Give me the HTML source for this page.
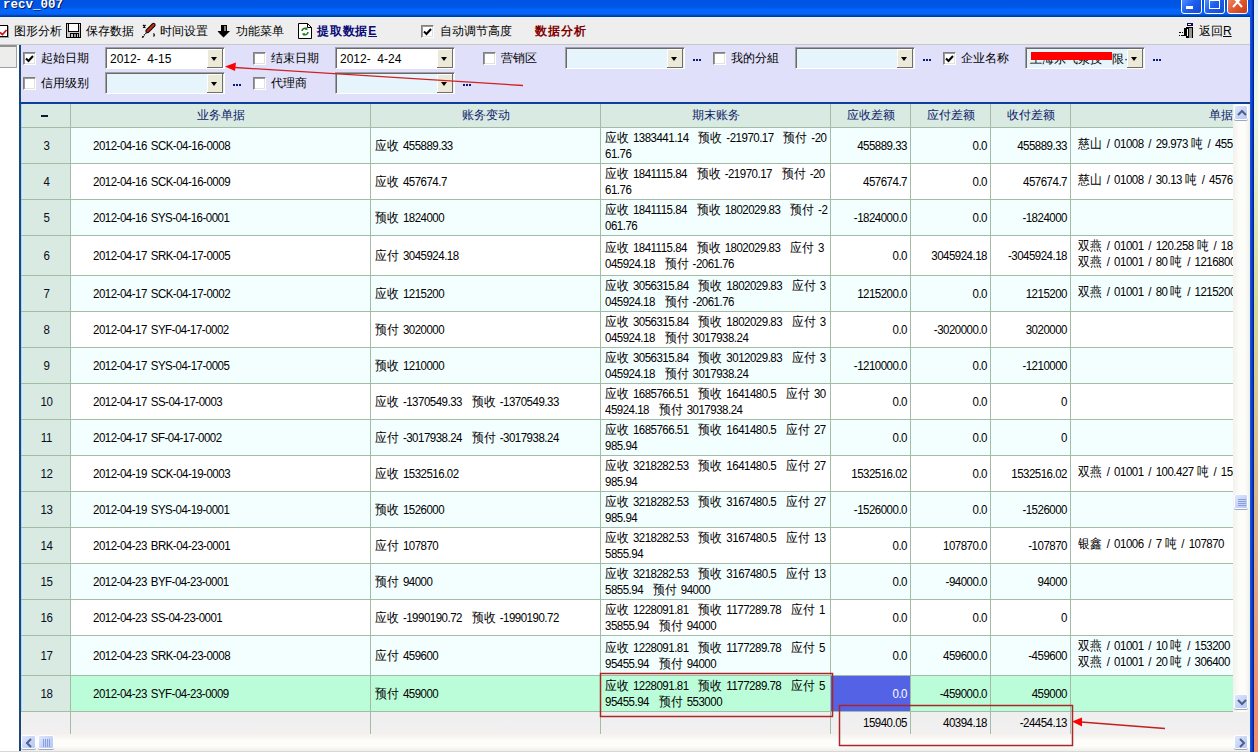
<!DOCTYPE html><html><head><meta charset="utf-8"><style>
*{margin:0;padding:0;box-sizing:border-box}
html,body{width:1260px;height:752px;overflow:hidden;background:#fff;font-family:"Liberation Sans",sans-serif;}
.a{position:absolute}
i.c{font-style:normal;font-size:12px;letter-spacing:0}
i.sp{font-style:normal;margin-left:2px}
.t{position:absolute;white-space:pre;font-size:11.5px;letter-spacing:-0.5px;word-spacing:1.2px;color:#000;line-height:14.6px;transform:scaleY(1.1);transform-origin:0 50%}
.lbl{position:absolute;white-space:pre;font-size:12px;color:#000;line-height:14px}
.cb{position:absolute;width:13px;height:13px;background:#fff;border-top:1px solid #808080;border-left:1px solid #808080;border-right:1px solid #fff;border-bottom:1px solid #fff;box-shadow:inset 1px 1px 0 #9a9a9a, inset -1px -1px 0 #e4e2da}
.combo{position:absolute;width:120px;height:22px;border-top:1px solid #a0a0a0;border-left:1px solid #a0a0a0;border-right:1px solid #fff;border-bottom:1px solid #fff;box-shadow:inset 1px 1px 0 #6a6a6a}
.btn{position:absolute;right:1px;top:1px;width:16px;height:19px;background:#ece9d8;border-right:1px solid #716f64;border-bottom:1px solid #716f64;box-shadow:inset 1px 1px 0 #fff}
.tri{position:absolute;left:4px;top:8px;width:0;height:0;border-left:3.5px solid transparent;border-right:3.5px solid transparent;border-top:4px solid #000}
.dots{position:absolute;width:8px;height:2px;background:linear-gradient(90deg,#0a1a80 2px,transparent 2px,transparent 3px,#0a1a80 3px,#0a1a80 5px,transparent 5px,transparent 6px,#0a1a80 6px)}
.hd{position:absolute;top:104px;height:23px;line-height:23px;font-size:12px;color:#0a1a6a;text-align:center;white-space:pre}
.rn{position:absolute;left:22px;width:49px;text-align:center;font-size:11.5px;color:#080c20;letter-spacing:-0.3px;transform:scaleY(1.1)}
</style></head><body>
<div class="a" style="left:1254px;top:0;width:6px;height:752px;background:linear-gradient(#d8f0f8 0%,#e8f8e0 14%,#d6dc94 40%,#dcb088 72%,#ee9070 93%,#ee9070 100%)"></div>
<div class="a" style="left:1258px;top:0;width:2px;height:752px;background:#fbfbf6"></div>
<div class="a" style="left:1250px;top:0;width:4px;height:752px;background:linear-gradient(90deg,#1a5ce8,#0838c8 60%,#001a80)"></div>
<div class="a" style="left:0;top:0;width:1250px;height:17px;background:linear-gradient(#0052e2 0px,#0058e8 8px,#0066fe 9.5px,#0462f6 14px,#0450d0 15px,#003a98 16px,#003a98 17px)"></div>
<div class="a" style="left:3px;top:-2px;font:bold 12.5px 'Liberation Mono';color:#fff;text-shadow:1px 1px 0 #0a1850;white-space:pre;line-height:14px">recv_007</div>
<div class="a" style="left:1181px;top:-4px;width:21px;height:18px;border:1px solid #fff;border-radius:3px;background:linear-gradient(135deg,#5a9cff,#1c5ef0 50%,#1848d0)"><div class="a" style="left:4px;top:9px;width:7px;height:3px;background:#fff"></div></div>
<div class="a" style="left:1204px;top:-4px;width:21px;height:18px;border:1px solid #fff;border-radius:3px;background:linear-gradient(135deg,#5a9cff,#1c5ef0 50%,#1848d0)"><div class="a" style="left:4px;top:1px;width:11px;height:11px;border:1px solid #fff;border-top-width:3px"></div></div>
<div class="a" style="left:1227px;top:-4px;width:21px;height:18px;border:1px solid #fff;border-radius:3px;background:linear-gradient(135deg,#f09070,#e05a30 50%,#c83818)"><svg class="a" style="left:4px;top:2px" width="12" height="10"><path d="M1 -2 L10 8 M10 -2 L1 8" stroke="#fff" stroke-width="2"/></svg></div>
<div class="a" style="left:0;top:17px;width:1250px;height:28px;background:linear-gradient(#eaeaf6 0px,#eeeeee 3px);border-top:1px solid #e0f8ff;border-bottom:1px solid #c8c8c8"></div>
<svg class="a" style="left:0;top:25px" width="10" height="13" shape-rendering="crispEdges"><rect x="0" y="0" width="8" height="12" fill="#000"/><rect x="0" y="1" width="7" height="10" fill="#fff"/><rect x="8" y="1" width="1" height="12" fill="#a0a0a0"/><rect x="0" y="12" width="9" height="1" fill="#a0a0a0"/><path d="M0 7.5 L2.5 9.5 L6.5 5" stroke="#d01818" stroke-width="1.8" fill="none" shape-rendering="auto"/></svg>
<div class="lbl" style="left:14px;top:24px">图形分析</div>
<svg class="a" style="left:66px;top:23px" width="15" height="15" shape-rendering="crispEdges"><rect x="0" y="0" width="15" height="15" fill="#000"/><rect x="1" y="1" width="13" height="13" fill="#c8c8c8"/><rect x="2" y="1" width="11" height="8" fill="#000"/><rect x="3" y="1" width="9" height="7" fill="#fff"/><rect x="13" y="1" width="1" height="1" fill="#fff"/><rect x="4" y="10" width="9" height="4" fill="#000"/><rect x="5" y="11" width="2" height="3" fill="#c8c8c8"/><rect x="8" y="11" width="2" height="3" fill="#909090"/><rect x="11" y="11" width="1" height="3" fill="#c8c8c8"/></svg>
<div class="lbl" style="left:86px;top:24px">保存数据</div>
<svg class="a" style="left:138px;top:20px" width="22" height="22"><path d="M9.5 11 L15.5 5" stroke="#000" stroke-width="4.2" stroke-linecap="round"/><path d="M9.5 11 L15.5 5" stroke="#c02818" stroke-width="2.4" stroke-linecap="round"/><path d="M4.5 17 L9 12" stroke="#000" stroke-width="1.2" stroke-dasharray="1.2 1"/><path d="M5 5 L7.5 7.5 M7.5 5 L5 7.5" stroke="#000" stroke-width="1.2"/><path d="M15.5 13.5 Q17 15 15.5 16.5" stroke="#000" stroke-width="1.2" fill="none"/><path d="M4 17.5 L6 16.5" stroke="#000" stroke-width="1.2"/></svg>
<div class="lbl" style="left:160px;top:24px">时间设置</div>
<svg class="a" style="left:217px;top:25px" width="14" height="13"><path d="M4 0 H10 V6 H13 L6.5 12.5 L0.5 6 H4 Z" fill="#000"/><rect x="7.5" y="1" width="1" height="5" fill="#fff"/><path d="M1.5 7.5 L6 12" stroke="#777" stroke-width="1"/></svg>
<div class="lbl" style="left:236px;top:24px">功能菜单</div>
<svg class="a" style="left:298px;top:23px" width="14" height="16"><path d="M0.5 0.5 H9.5 L13.5 4.5 V15.5 H0.5 Z" fill="#fff" stroke="#000"/><path d="M9.5 0.5 V4.5 H13.5" fill="none" stroke="#000"/><path d="M4 8 A3 3 0 0 1 9 6 M10 9 A3 3 0 0 1 5 11" stroke="#208020" stroke-width="1.6" fill="none"/><path d="M8 4 L10 6.5 L7 7 Z M6 13 L4 10.5 L7 10 Z" fill="#208020"/></svg>
<div class="lbl" style="left:317px;top:24px;font-weight:bold;color:#0a0a78;letter-spacing:0.8px">提取数据<u>E</u></div>
<div class="cb" style="left:421px;top:25px"></div>
<svg class="a" style="left:423px;top:28px" width="9" height="8"><path d="M1 3.5 L3.5 6 L8 1" stroke="#000" stroke-width="2" fill="none"/></svg>
<div class="lbl" style="left:440px;top:24px">自动调节高度</div>
<div class="lbl" style="left:535px;top:24px;font-weight:bold;color:#800000;letter-spacing:1px">数据分析</div>
<svg class="a" style="left:1178px;top:22px" width="16" height="17" shape-rendering="crispEdges"><rect x="9" y="1" width="6" height="3" fill="#0a0a50"/><rect x="10" y="2" width="3" height="1" fill="#fff"/><rect x="8" y="5" width="7" height="11" fill="#000"/><rect x="11" y="6" width="3" height="10" fill="#959595"/><rect x="9" y="7" width="1" height="7" fill="#fff"/><rect x="6" y="6" width="3" height="8" fill="#000"/><rect x="1" y="10" width="2" height="1" fill="#000"/><rect x="4" y="10" width="1" height="1" fill="#000"/><rect x="1" y="13" width="1" height="1" fill="#000"/><rect x="3" y="13" width="3" height="1" fill="#000"/></svg>
<div class="lbl" style="left:1199px;top:24px">返回<u>R</u></div>
<div class="a" style="left:0;top:45px;width:19px;height:707px;background:#fff"></div>
<div class="a" style="left:-2px;top:45px;width:19px;height:23px;background:#ededeb;border:1px solid #a0a0a0;border-top:2px solid #909090"></div>
<div class="a" style="left:19px;top:45px;width:1231px;height:57px;background:#e0e0fa"></div>
<div class="a" style="left:19px;top:45px;width:2px;height:707px;background:#1c4578"></div>
<div class="cb" style="left:23px;top:52px"></div>
<svg class="a" style="left:25px;top:55px" width="9" height="8"><path d="M1 3.5 L3.5 6 L8 1" stroke="#000" stroke-width="2" fill="none"/></svg>
<div class="lbl" style="left:41px;top:51px">起始日期</div>
<div class="combo" style="left:105px;top:47px;background:#fff"><div class="a" style="left:4px;top:4px;font-size:12px;white-space:pre;line-height:14px">2012-  4-15</div><div class="btn"><div class="tri"></div></div></div>
<div class="cb" style="left:253px;top:52px"></div>
<div class="lbl" style="left:271px;top:51px">结束日期</div>
<div class="combo" style="left:335px;top:47px;background:#fff"><div class="a" style="left:4px;top:4px;font-size:12px;white-space:pre;line-height:14px">2012-  4-24</div><div class="btn"><div class="tri"></div></div></div>
<div class="cb" style="left:483px;top:52px"></div>
<div class="lbl" style="left:501px;top:51px">营销区</div>
<div class="combo" style="left:565px;top:47px;background:#e6f4fc"><div class="a" style="left:4px;top:4px;font-size:12px;white-space:pre;line-height:14px"></div><div class="btn"><div class="tri"></div></div></div>
<div class="dots" style="left:693px;top:59px"></div>
<div class="cb" style="left:713px;top:52px"></div>
<div class="lbl" style="left:731px;top:51px">我的分組</div>
<div class="combo" style="left:795px;top:47px;background:#e6f4fc"><div class="a" style="left:4px;top:4px;font-size:12px;white-space:pre;line-height:14px"></div><div class="btn"><div class="tri"></div></div></div>
<div class="dots" style="left:923px;top:59px"></div>
<div class="cb" style="left:943px;top:52px"></div>
<svg class="a" style="left:945px;top:55px" width="9" height="8"><path d="M1 3.5 L3.5 6 L8 1" stroke="#000" stroke-width="2" fill="none"/></svg>
<div class="lbl" style="left:961px;top:51px">企业名称</div>
<div class="combo" style="left:1025px;top:47px;background:#e6f4fc"><div class="a" style="left:86px;top:4px;font-size:12px;line-height:14px;white-space:pre">限·</div><div class="a" style="left:4px;top:4px;font-size:12px;white-space:pre;line-height:14px"><span style="position:relative;top:0px">上海东气泵技</span></div><div class="btn"><div class="tri"></div></div></div>
<div class="dots" style="left:1153px;top:59px"></div>
<div class="a" style="left:1031px;top:52px;width:81px;height:8px;background:#ff0000"></div>
<div class="cb" style="left:23px;top:77px"></div>
<div class="lbl" style="left:41px;top:76px">信用级别</div>
<div class="combo" style="left:105px;top:72px;background:#e6f4fc"><div class="a" style="left:4px;top:4px;font-size:12px;white-space:pre;line-height:14px"></div><div class="btn"><div class="tri"></div></div></div>
<div class="dots" style="left:233px;top:84px"></div>
<div class="cb" style="left:253px;top:77px"></div>
<div class="lbl" style="left:271px;top:76px">代理商</div>
<div class="combo" style="left:335px;top:72px;background:#e6f4fc"><div class="a" style="left:4px;top:4px;font-size:12px;white-space:pre;line-height:14px"></div><div class="btn"><div class="tri"></div></div></div>
<div class="dots" style="left:463px;top:84px"></div>
<div class="a" style="left:19px;top:102px;width:1231px;height:2px;background:#0c3e9e"></div>
<div class="a" style="left:21px;top:104px;width:1212px;height:607px;background:#fff"></div>
<div class="a" style="left:21px;top:104px;width:1212px;height:23px;background:#d9eae2"></div>
<div class="a" style="left:71px;top:128px;width:1162px;height:35px;background:#f3fefe"></div>
<div class="a" style="left:71px;top:164px;width:1162px;height:35px;background:#ffffff"></div>
<div class="a" style="left:71px;top:200px;width:1162px;height:35px;background:#f3fefe"></div>
<div class="a" style="left:71px;top:236px;width:1162px;height:39px;background:#ffffff"></div>
<div class="a" style="left:71px;top:276px;width:1162px;height:35px;background:#f3fefe"></div>
<div class="a" style="left:71px;top:312px;width:1162px;height:35px;background:#ffffff"></div>
<div class="a" style="left:71px;top:348px;width:1162px;height:35px;background:#f3fefe"></div>
<div class="a" style="left:71px;top:384px;width:1162px;height:35px;background:#ffffff"></div>
<div class="a" style="left:71px;top:420px;width:1162px;height:35px;background:#f3fefe"></div>
<div class="a" style="left:71px;top:456px;width:1162px;height:35px;background:#ffffff"></div>
<div class="a" style="left:71px;top:492px;width:1162px;height:35px;background:#f3fefe"></div>
<div class="a" style="left:71px;top:528px;width:1162px;height:35px;background:#ffffff"></div>
<div class="a" style="left:71px;top:564px;width:1162px;height:35px;background:#f3fefe"></div>
<div class="a" style="left:71px;top:600px;width:1162px;height:35px;background:#ffffff"></div>
<div class="a" style="left:71px;top:636px;width:1162px;height:39px;background:#f3fefe"></div>
<div class="a" style="left:71px;top:676px;width:1162px;height:35px;background:#bbfdd8"></div>
<div class="a" style="left:831px;top:676px;width:79px;height:35px;background:#5462e6"></div>
<div class="a" style="left:21px;top:128px;width:49px;height:583px;background:#d9eae2"></div>
<div class="a" style="left:21px;top:104px;width:1px;height:630px;background:#a8d6f6"></div>
<div class="a" style="left:22px;top:104px;width:1px;height:630px;background:#cdeefb"></div>
<div class="a" style="left:21px;top:712px;width:1229px;height:22px;background:linear-gradient(#efefef,#f2f0f0)"></div>
<div class="a" style="left:21px;top:127px;width:1212px;height:1px;background:#a2bca5"></div>
<div class="a" style="left:21px;top:163px;width:1212px;height:1px;background:#a2bca5"></div>
<div class="a" style="left:21px;top:199px;width:1212px;height:1px;background:#a2bca5"></div>
<div class="a" style="left:21px;top:235px;width:1212px;height:1px;background:#a2bca5"></div>
<div class="a" style="left:21px;top:275px;width:1212px;height:1px;background:#a2bca5"></div>
<div class="a" style="left:21px;top:311px;width:1212px;height:1px;background:#a2bca5"></div>
<div class="a" style="left:21px;top:347px;width:1212px;height:1px;background:#a2bca5"></div>
<div class="a" style="left:21px;top:383px;width:1212px;height:1px;background:#a2bca5"></div>
<div class="a" style="left:21px;top:419px;width:1212px;height:1px;background:#a2bca5"></div>
<div class="a" style="left:21px;top:455px;width:1212px;height:1px;background:#a2bca5"></div>
<div class="a" style="left:21px;top:491px;width:1212px;height:1px;background:#a2bca5"></div>
<div class="a" style="left:21px;top:527px;width:1212px;height:1px;background:#a2bca5"></div>
<div class="a" style="left:21px;top:563px;width:1212px;height:1px;background:#a2bca5"></div>
<div class="a" style="left:21px;top:599px;width:1212px;height:1px;background:#a2bca5"></div>
<div class="a" style="left:21px;top:635px;width:1212px;height:1px;background:#a2bca5"></div>
<div class="a" style="left:21px;top:675px;width:1212px;height:1px;background:#a2bca5"></div>
<div class="a" style="left:21px;top:711px;width:1212px;height:1px;background:#a2bca5"></div>
<div class="a" style="left:70px;top:104px;width:1px;height:630px;background:#a2bca5"></div>
<div class="a" style="left:370px;top:104px;width:1px;height:630px;background:#a2bca5"></div>
<div class="a" style="left:600px;top:104px;width:1px;height:630px;background:#a2bca5"></div>
<div class="a" style="left:830px;top:104px;width:1px;height:630px;background:#a2bca5"></div>
<div class="a" style="left:910px;top:104px;width:1px;height:630px;background:#a2bca5"></div>
<div class="a" style="left:990px;top:104px;width:1px;height:630px;background:#a2bca5"></div>
<div class="a" style="left:1070px;top:104px;width:1px;height:630px;background:#a2bca5"></div>
<div class="hd" style="left:21px;width:49px"></div>
<div class="hd" style="left:71px;width:299px">业务单据</div>
<div class="hd" style="left:371px;width:229px">账务变动</div>
<div class="hd" style="left:601px;width:229px">期末账务</div>
<div class="hd" style="left:831px;width:79px">应收差额</div>
<div class="hd" style="left:911px;width:79px">应付差额</div>
<div class="hd" style="left:991px;width:79px">收付差额</div>
<div class="hd" style="left:1071px;width:162px;text-align:right">单据</div>
<div class="a" style="left:41px;top:115px;width:7px;height:2px;background:#101830"></div>
<div class="rn" style="top:138.1px;line-height:17px">3</div>
<div class="t" style="left:93px;top:139.29999999999998px;color:#000">2012-04-16 SCK-04-16-0008</div>
<div class="t" style="left:375px;top:139.29999999999998px;color:#000"><i class="c">应收</i> 455889.33</div>
<div class="t" style="left:605px;top:131.1px;color:#000"><i class="c">应收</i> 1383441.14 <i class="sp"> </i><i class="c">预收</i> -21970.17 <i class="sp"> </i><i class="c">预付</i> -20<br>61.76</div>
<div class="t" style="left:831px;top:139.29999999999998px;color:#000;width:76px;text-align:right">455889.33</div>
<div class="t" style="left:911px;top:139.29999999999998px;color:#000;width:76px;text-align:right">0.0</div>
<div class="t" style="left:991px;top:139.29999999999998px;color:#000;width:76px;text-align:right">455889.33</div>
<div class="a" style="left:1071px;top:128px;width:162px;height:35px;overflow:hidden"><div class="t" style="left:7px;top:8.799999999999983px;word-spacing:2px"><i class="c">慈山</i> / 01008 / 29.973<i class="c" style="margin-left:3px">吨</i> / 455889.33</div></div>
<div class="rn" style="top:174.1px;line-height:17px">4</div>
<div class="t" style="left:93px;top:175.29999999999998px;color:#000">2012-04-16 SCK-04-16-0009</div>
<div class="t" style="left:375px;top:175.29999999999998px;color:#000"><i class="c">应收</i> 457674.7</div>
<div class="t" style="left:605px;top:167.1px;color:#000"><i class="c">应收</i> 1841115.84 <i class="sp"> </i><i class="c">预收</i> -21970.17 <i class="sp"> </i><i class="c">预付</i> -20<br>61.76</div>
<div class="t" style="left:831px;top:175.29999999999998px;color:#000;width:76px;text-align:right">457674.7</div>
<div class="t" style="left:911px;top:175.29999999999998px;color:#000;width:76px;text-align:right">0.0</div>
<div class="t" style="left:991px;top:175.29999999999998px;color:#000;width:76px;text-align:right">457674.7</div>
<div class="a" style="left:1071px;top:164px;width:162px;height:35px;overflow:hidden"><div class="t" style="left:7px;top:8.799999999999983px;word-spacing:2px"><i class="c">慈山</i> / 01008 / 30.13<i class="c" style="margin-left:3px">吨</i> / 457674.7</div></div>
<div class="rn" style="top:210.1px;line-height:17px">5</div>
<div class="t" style="left:93px;top:211.29999999999998px;color:#000">2012-04-16 SYS-04-16-0001</div>
<div class="t" style="left:375px;top:211.29999999999998px;color:#000"><i class="c">预收</i> 1824000</div>
<div class="t" style="left:605px;top:203.1px;color:#000"><i class="c">应收</i> 1841115.84 <i class="sp"> </i><i class="c">预收</i> 1802029.83 <i class="sp"> </i><i class="c">预付</i> -2<br>061.76</div>
<div class="t" style="left:831px;top:211.29999999999998px;color:#000;width:76px;text-align:right">-1824000.0</div>
<div class="t" style="left:911px;top:211.29999999999998px;color:#000;width:76px;text-align:right">0.0</div>
<div class="t" style="left:991px;top:211.29999999999998px;color:#000;width:76px;text-align:right">-1824000</div>
<div class="rn" style="top:248.1px;line-height:17px">6</div>
<div class="t" style="left:93px;top:249.29999999999998px;color:#000">2012-04-17 SRK-04-17-0005</div>
<div class="t" style="left:375px;top:249.29999999999998px;color:#000"><i class="c">应付</i> 3045924.18</div>
<div class="t" style="left:605px;top:241.1px;color:#000"><i class="c">应收</i> 1841115.84 <i class="sp"> </i><i class="c">预收</i> 1802029.83 <i class="sp"> </i><i class="c">应付</i> 3<br>045924.18 <i class="sp"> </i><i class="c">预付</i> -2061.76</div>
<div class="t" style="left:831px;top:249.29999999999998px;color:#000;width:76px;text-align:right">0.0</div>
<div class="t" style="left:911px;top:249.29999999999998px;color:#000;width:76px;text-align:right">3045924.18</div>
<div class="t" style="left:991px;top:249.29999999999998px;color:#000;width:76px;text-align:right">-3045924.18</div>
<div class="a" style="left:1071px;top:236px;width:162px;height:39px;overflow:hidden"><div class="t" style="left:7px;top:2.5999999999999943px;word-spacing:2px"><i class="c">双燕</i> / 01001 / 120.258<i class="c" style="margin-left:3px">吨</i> / 1829124.18<br><i class="c">双燕</i> / 01001 / 80<i class="c" style="margin-left:3px">吨</i> / 1216800</div></div>
<div class="rn" style="top:286.1px;line-height:17px">7</div>
<div class="t" style="left:93px;top:287.3px;color:#000">2012-04-17 SCK-04-17-0002</div>
<div class="t" style="left:375px;top:287.3px;color:#000"><i class="c">应收</i> 1215200</div>
<div class="t" style="left:605px;top:279.1px;color:#000"><i class="c">应收</i> 3056315.84 <i class="sp"> </i><i class="c">预收</i> 1802029.83 <i class="sp"> </i><i class="c">应付</i> 3<br>045924.18 <i class="sp"> </i><i class="c">预付</i> -2061.76</div>
<div class="t" style="left:831px;top:287.3px;color:#000;width:76px;text-align:right">1215200.0</div>
<div class="t" style="left:911px;top:287.3px;color:#000;width:76px;text-align:right">0.0</div>
<div class="t" style="left:991px;top:287.3px;color:#000;width:76px;text-align:right">1215200</div>
<div class="a" style="left:1071px;top:276px;width:162px;height:35px;overflow:hidden"><div class="t" style="left:7px;top:8.800000000000011px;word-spacing:2px"><i class="c">双燕</i> / 01001 / 80<i class="c" style="margin-left:3px">吨</i> / 1215200</div></div>
<div class="rn" style="top:322.1px;line-height:17px">8</div>
<div class="t" style="left:93px;top:323.3px;color:#000">2012-04-17 SYF-04-17-0002</div>
<div class="t" style="left:375px;top:323.3px;color:#000"><i class="c">预付</i> 3020000</div>
<div class="t" style="left:605px;top:315.1px;color:#000"><i class="c">应收</i> 3056315.84 <i class="sp"> </i><i class="c">预收</i> 1802029.83 <i class="sp"> </i><i class="c">应付</i> 3<br>045924.18 <i class="sp"> </i><i class="c">预付</i> 3017938.24</div>
<div class="t" style="left:831px;top:323.3px;color:#000;width:76px;text-align:right">0.0</div>
<div class="t" style="left:911px;top:323.3px;color:#000;width:76px;text-align:right">-3020000.0</div>
<div class="t" style="left:991px;top:323.3px;color:#000;width:76px;text-align:right">3020000</div>
<div class="rn" style="top:358.1px;line-height:17px">9</div>
<div class="t" style="left:93px;top:359.3px;color:#000">2012-04-17 SYS-04-17-0005</div>
<div class="t" style="left:375px;top:359.3px;color:#000"><i class="c">预收</i> 1210000</div>
<div class="t" style="left:605px;top:351.1px;color:#000"><i class="c">应收</i> 3056315.84 <i class="sp"> </i><i class="c">预收</i> 3012029.83 <i class="sp"> </i><i class="c">应付</i> 3<br>045924.18 <i class="sp"> </i><i class="c">预付</i> 3017938.24</div>
<div class="t" style="left:831px;top:359.3px;color:#000;width:76px;text-align:right">-1210000.0</div>
<div class="t" style="left:911px;top:359.3px;color:#000;width:76px;text-align:right">0.0</div>
<div class="t" style="left:991px;top:359.3px;color:#000;width:76px;text-align:right">-1210000</div>
<div class="rn" style="top:394.1px;line-height:17px">10</div>
<div class="t" style="left:93px;top:395.3px;color:#000">2012-04-17 SS-04-17-0003</div>
<div class="t" style="left:375px;top:395.3px;color:#000"><i class="c">应收</i> -1370549.33 <i class="sp"> </i><i class="c">预收</i> -1370549.33</div>
<div class="t" style="left:605px;top:387.1px;color:#000"><i class="c">应收</i> 1685766.51 <i class="sp"> </i><i class="c">预收</i> 1641480.5 <i class="sp"> </i><i class="c">应付</i> 30<br>45924.18 <i class="sp"> </i><i class="c">预付</i> 3017938.24</div>
<div class="t" style="left:831px;top:395.3px;color:#000;width:76px;text-align:right">0.0</div>
<div class="t" style="left:911px;top:395.3px;color:#000;width:76px;text-align:right">0.0</div>
<div class="t" style="left:991px;top:395.3px;color:#000;width:76px;text-align:right">0</div>
<div class="rn" style="top:430.1px;line-height:17px">11</div>
<div class="t" style="left:93px;top:431.3px;color:#000">2012-04-17 SF-04-17-0002</div>
<div class="t" style="left:375px;top:431.3px;color:#000"><i class="c">应付</i> -3017938.24 <i class="sp"> </i><i class="c">预付</i> -3017938.24</div>
<div class="t" style="left:605px;top:423.1px;color:#000"><i class="c">应收</i> 1685766.51 <i class="sp"> </i><i class="c">预收</i> 1641480.5 <i class="sp"> </i><i class="c">应付</i> 27<br>985.94</div>
<div class="t" style="left:831px;top:431.3px;color:#000;width:76px;text-align:right">0.0</div>
<div class="t" style="left:911px;top:431.3px;color:#000;width:76px;text-align:right">0.0</div>
<div class="t" style="left:991px;top:431.3px;color:#000;width:76px;text-align:right">0</div>
<div class="rn" style="top:466.1px;line-height:17px">12</div>
<div class="t" style="left:93px;top:467.3px;color:#000">2012-04-19 SCK-04-19-0003</div>
<div class="t" style="left:375px;top:467.3px;color:#000"><i class="c">应收</i> 1532516.02</div>
<div class="t" style="left:605px;top:459.1px;color:#000"><i class="c">应收</i> 3218282.53 <i class="sp"> </i><i class="c">预收</i> 1641480.5 <i class="sp"> </i><i class="c">应付</i> 27<br>985.94</div>
<div class="t" style="left:831px;top:467.3px;color:#000;width:76px;text-align:right">1532516.02</div>
<div class="t" style="left:911px;top:467.3px;color:#000;width:76px;text-align:right">0.0</div>
<div class="t" style="left:991px;top:467.3px;color:#000;width:76px;text-align:right">1532516.02</div>
<div class="a" style="left:1071px;top:456px;width:162px;height:35px;overflow:hidden"><div class="t" style="left:7px;top:8.800000000000011px;word-spacing:2px"><i class="c">双燕</i> / 01001 / 100.427<i class="c" style="margin-left:3px">吨</i> / 1532516.02</div></div>
<div class="rn" style="top:502.1px;line-height:17px">13</div>
<div class="t" style="left:93px;top:503.3px;color:#000">2012-04-19 SYS-04-19-0001</div>
<div class="t" style="left:375px;top:503.3px;color:#000"><i class="c">预收</i> 1526000</div>
<div class="t" style="left:605px;top:495.1px;color:#000"><i class="c">应收</i> 3218282.53 <i class="sp"> </i><i class="c">预收</i> 3167480.5 <i class="sp"> </i><i class="c">应付</i> 27<br>985.94</div>
<div class="t" style="left:831px;top:503.3px;color:#000;width:76px;text-align:right">-1526000.0</div>
<div class="t" style="left:911px;top:503.3px;color:#000;width:76px;text-align:right">0.0</div>
<div class="t" style="left:991px;top:503.3px;color:#000;width:76px;text-align:right">-1526000</div>
<div class="rn" style="top:538.1px;line-height:17px">14</div>
<div class="t" style="left:93px;top:539.3000000000001px;color:#000">2012-04-23 BRK-04-23-0001</div>
<div class="t" style="left:375px;top:539.3000000000001px;color:#000"><i class="c">应付</i> 107870</div>
<div class="t" style="left:605px;top:531.1px;color:#000"><i class="c">应收</i> 3218282.53 <i class="sp"> </i><i class="c">预收</i> 3167480.5 <i class="sp"> </i><i class="c">应付</i> 13<br>5855.94</div>
<div class="t" style="left:831px;top:539.3000000000001px;color:#000;width:76px;text-align:right">0.0</div>
<div class="t" style="left:911px;top:539.3000000000001px;color:#000;width:76px;text-align:right">107870.0</div>
<div class="t" style="left:991px;top:539.3000000000001px;color:#000;width:76px;text-align:right">-107870</div>
<div class="a" style="left:1071px;top:528px;width:162px;height:35px;overflow:hidden"><div class="t" style="left:7px;top:8.800000000000068px;word-spacing:2px"><i class="c">银鑫</i> / 01006 / 7<i class="c" style="margin-left:3px">吨</i> / 107870</div></div>
<div class="rn" style="top:574.1px;line-height:17px">15</div>
<div class="t" style="left:93px;top:575.3000000000001px;color:#000">2012-04-23 BYF-04-23-0001</div>
<div class="t" style="left:375px;top:575.3000000000001px;color:#000"><i class="c">预付</i> 94000</div>
<div class="t" style="left:605px;top:567.1px;color:#000"><i class="c">应收</i> 3218282.53 <i class="sp"> </i><i class="c">预收</i> 3167480.5 <i class="sp"> </i><i class="c">应付</i> 13<br>5855.94 <i class="sp"> </i><i class="c">预付</i> 94000</div>
<div class="t" style="left:831px;top:575.3000000000001px;color:#000;width:76px;text-align:right">0.0</div>
<div class="t" style="left:911px;top:575.3000000000001px;color:#000;width:76px;text-align:right">-94000.0</div>
<div class="t" style="left:991px;top:575.3000000000001px;color:#000;width:76px;text-align:right">94000</div>
<div class="rn" style="top:610.1px;line-height:17px">16</div>
<div class="t" style="left:93px;top:611.3000000000001px;color:#000">2012-04-23 SS-04-23-0001</div>
<div class="t" style="left:375px;top:611.3000000000001px;color:#000"><i class="c">应收</i> -1990190.72 <i class="sp"> </i><i class="c">预收</i> -1990190.72</div>
<div class="t" style="left:605px;top:603.1px;color:#000"><i class="c">应收</i> 1228091.81 <i class="sp"> </i><i class="c">预收</i> 1177289.78 <i class="sp"> </i><i class="c">应付</i> 1<br>35855.94 <i class="sp"> </i><i class="c">预付</i> 94000</div>
<div class="t" style="left:831px;top:611.3000000000001px;color:#000;width:76px;text-align:right">0.0</div>
<div class="t" style="left:911px;top:611.3000000000001px;color:#000;width:76px;text-align:right">0.0</div>
<div class="t" style="left:991px;top:611.3000000000001px;color:#000;width:76px;text-align:right">0</div>
<div class="rn" style="top:648.1px;line-height:17px">17</div>
<div class="t" style="left:93px;top:649.3000000000001px;color:#000">2012-04-23 SRK-04-23-0008</div>
<div class="t" style="left:375px;top:649.3000000000001px;color:#000"><i class="c">应付</i> 459600</div>
<div class="t" style="left:605px;top:641.1px;color:#000"><i class="c">应收</i> 1228091.81 <i class="sp"> </i><i class="c">预收</i> 1177289.78 <i class="sp"> </i><i class="c">应付</i> 5<br>95455.94 <i class="sp"> </i><i class="c">预付</i> 94000</div>
<div class="t" style="left:831px;top:649.3000000000001px;color:#000;width:76px;text-align:right">0.0</div>
<div class="t" style="left:911px;top:649.3000000000001px;color:#000;width:76px;text-align:right">459600.0</div>
<div class="t" style="left:991px;top:649.3000000000001px;color:#000;width:76px;text-align:right">-459600</div>
<div class="a" style="left:1071px;top:636px;width:162px;height:39px;overflow:hidden"><div class="t" style="left:7px;top:2.6000000000000227px;word-spacing:2px"><i class="c">双燕</i> / 01001 / 10<i class="c" style="margin-left:3px">吨</i> / 153200<br><i class="c">双燕</i> / 01001 / 20<i class="c" style="margin-left:3px">吨</i> / 306400</div></div>
<div class="rn" style="top:686.1px;line-height:17px">18</div>
<div class="t" style="left:93px;top:687.3000000000001px;color:#000">2012-04-23 SYF-04-23-0009</div>
<div class="t" style="left:375px;top:687.3000000000001px;color:#000"><i class="c">预付</i> 459000</div>
<div class="t" style="left:605px;top:679.1px;color:#000"><i class="c">应收</i> 1228091.81 <i class="sp"> </i><i class="c">预收</i> 1177289.78 <i class="sp"> </i><i class="c">应付</i> 5<br>95455.94 <i class="sp"> </i><i class="c">预付</i> 553000</div>
<div class="t" style="left:831px;top:687.3000000000001px;color:#fff;width:76px;text-align:right">0.0</div>
<div class="t" style="left:911px;top:687.3000000000001px;color:#000;width:76px;text-align:right">-459000.0</div>
<div class="t" style="left:991px;top:687.3000000000001px;color:#000;width:76px;text-align:right">459000</div>
<div class="t" style="left:831px;top:716.2px;width:76px;text-align:right">15940.05</div>
<div class="t" style="left:911px;top:716.2px;width:76px;text-align:right">40394.18</div>
<div class="t" style="left:991px;top:716.2px;width:76px;text-align:right">-24454.13</div>
<div class="a" style="left:1233px;top:104px;width:17px;height:608px;background:linear-gradient(90deg,#f3f1ec,#fdfdfa 40%,#fdfdfa 70%,#f0eee8)"></div>
<div class="a" style="left:1234px;top:105px;width:14px;height:15px;border-radius:2px;background:linear-gradient(135deg,#e0e8fe,#c4d2f8 60%,#b8c8f4);border:1px solid #fff;box-shadow:0 1px 0 #9aa8c8"><svg class="a" style="left:2px;top:3px" width="10" height="8"><path d="M1 6 L5 2 L9 6" stroke="#4d6185" stroke-width="2" fill="none"/></svg></div>
<div class="a" style="left:1234px;top:494px;width:14px;height:15px;border-radius:2px;background:linear-gradient(135deg,#e0e8fe,#c4d2f8 60%,#b8c8f4);border:1px solid #fff;box-shadow:0 1px 0 #9aa8c8"><svg class="a" style="left:3px;top:4px" width="8" height="7"><path d="M0 0.5 H8 M0 2.5 H8 M0 4.5 H8 M0 6.5 H8" stroke="#8aa0d8" stroke-width="1"/></svg></div>
<div class="a" style="left:1234px;top:694px;width:14px;height:15px;border-radius:2px;background:linear-gradient(135deg,#e0e8fe,#c4d2f8 60%,#b8c8f4);border:1px solid #fff;box-shadow:0 1px 0 #9aa8c8"><svg class="a" style="left:2px;top:3px" width="10" height="8"><path d="M1 2 L5 6 L9 2" stroke="#4d6185" stroke-width="2" fill="none"/></svg></div>
<div class="a" style="left:21px;top:734px;width:1229px;height:17px;background:linear-gradient(#f3f1ec,#fdfdfa 40%,#fdfdfa 70%,#f0eee8)"></div>
<div class="a" style="left:21px;top:735px;width:15px;height:14px;border-radius:2px;background:linear-gradient(135deg,#e0e8fe,#c4d2f8 60%,#b8c8f4);border:1px solid #fff;box-shadow:0 1px 0 #9aa8c8"><svg class="a" style="left:3px;top:2px" width="8" height="10"><path d="M6 1 L2 5 L6 9" stroke="#4d6185" stroke-width="2" fill="none"/></svg></div>
<div class="a" style="left:38px;top:735px;width:16px;height:14px;border-radius:2px;background:linear-gradient(135deg,#e0e8fe,#c4d2f8 60%,#b8c8f4);border:1px solid #fff;box-shadow:0 1px 0 #9aa8c8"><svg class="a" style="left:4px;top:3px" width="7" height="8"><path d="M0.5 0 V8 M2.5 0 V8 M4.5 0 V8 M6.5 0 V8" stroke="#8aa0d8" stroke-width="1"/></svg></div>
<div class="a" style="left:1234px;top:735px;width:14px;height:14px;border-radius:2px;background:linear-gradient(135deg,#e0e8fe,#c4d2f8 60%,#b8c8f4);border:1px solid #fff;box-shadow:0 1px 0 #9aa8c8"><svg class="a" style="left:3px;top:2px" width="8" height="10"><path d="M2 1 L6 5 L2 9" stroke="#4d6185" stroke-width="2" fill="none"/></svg></div>
<div class="a" style="left:0;top:751px;width:1250px;height:1px;background:#d8d8d8"></div>
<svg class="a" style="left:0;top:0" width="1260" height="752"><line x1="235" y1="67.5" x2="523" y2="85.5" stroke="#d02020" stroke-width="1.3"/><path d="M225 66.5 L236 62.5 L235 71 Z" fill="#ff0000"/><rect x="600.5" y="673.5" width="232" height="43" fill="none" stroke="#a82828" stroke-width="1.5"/><rect x="839.5" y="705.5" width="233" height="40" fill="none" stroke="#a82828" stroke-width="1.5"/><line x1="1081" y1="722" x2="1165" y2="728.5" stroke="#c02020" stroke-width="1.3"/><path d="M1072 721.5 L1082 717.5 L1082 726.5 Z" fill="#ff0000"/></svg>
</body></html>
